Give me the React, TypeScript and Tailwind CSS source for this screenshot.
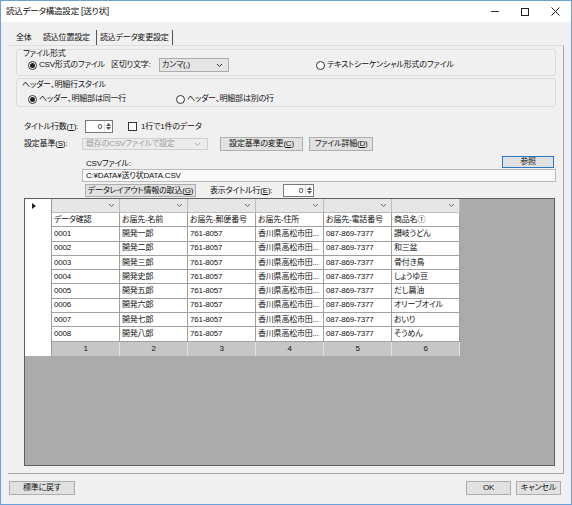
import React from "react";

const rows = [
  ["0001", "開発一郎", "讃岐うどん"],
  ["0002", "開発二郎", "和三盆"],
  ["0003", "開発三郎", "骨付き鳥"],
  ["0004", "開発史郎", "しょうゆ豆"],
  ["0005", "開発五郎", "だし醤油"],
  ["0006", "開発六郎", "オリーブオイル"],
  ["0007", "開発七郎", "おいり"],
  ["0008", "開発八郎", "そうめん"],
];

function Chevron({ color = "#6b6b6b" }: { color?: string }) {
  return (
    <svg width="7" height="5" viewBox="0 0 7 5">
      <polyline points="1,1 3.5,3.5 6,1" fill="none" stroke={color} strokeWidth="1" />
    </svg>
  );
}

function Radio({ on }: { on?: boolean }) {
  return (
    <span className="w-[9px] h-[9px] rounded-full border border-[#333] bg-white flex items-center justify-center shrink-0">
      {on && <span className="w-[5px] h-[5px] rounded-full bg-[#222]" />}
    </span>
  );
}

function Spin({ w }: { w: string }) {
  return (
    <div className={`${w} h-[13px] bg-white border border-[#7a7a7a] flex items-center`}>
      <span className="flex-1 text-right pr-[2px] leading-none">0</span>
      <div className="w-[8px] h-full flex flex-col items-center justify-center gap-[1px] border-l border-[#e0e0e0]">
        <svg width="5" height="3" viewBox="0 0 5 3"><polygon points="0,3 2.5,0 5,3" fill="#555" /></svg>
        <svg width="5" height="3" viewBox="0 0 5 3"><polygon points="0,0 2.5,3 5,0" fill="#555" /></svg>
      </div>
    </div>
  );
}

function Btn({ children, className = "" }: { children: React.ReactNode; className?: string }) {
  return (
    <div className={`h-[14px] bg-[#e1e1e1] border border-[#adadad] flex items-center justify-center whitespace-nowrap leading-none ${className}`}>
      {children}
    </div>
  );
}

export default function App() {
  const cols = ["データ確認", "お届先-名前", "お届先-郵便番号", "お届先-住所", "お届先-電話番号", "商品名①"];
  return (
    <div className="w-[572px] h-[505px] border border-[#6aa1d8] bg-[#f0f0f0] flex flex-col text-[8px] tracking-[-0.2px] text-[#111] font-['Liberation_Sans','Noto_Sans_CJK_JP',sans-serif] [font-feature-settings:'palt'] overflow-hidden">
      {/* title bar */}
      <div className="h-[21px] bg-white flex items-center shrink-0">
        <span className="pl-[5px] text-[8.5px]">読込データ構造設定 [送り状]</span>
        <div className="ml-auto flex items-center h-full">
          <div className="w-[30px] flex justify-center"><div className="w-[8px] h-px bg-[#333]" /></div>
          <div className="w-[30px] flex justify-center"><div className="w-[8px] h-[8px] border border-[#222]" /></div>
          <div className="w-[31px] flex justify-center">
            <svg width="9" height="9" viewBox="0 0 9 9"><path d="M0.5 0.5 L8.5 8.5 M8.5 0.5 L0.5 8.5" stroke="#222" strokeWidth="1" /></svg>
          </div>
        </div>
      </div>

      {/* tabs */}
      <div className="h-[23px] flex items-end pl-[9px] shrink-0">
        <div className="w-[29px] h-[14px] flex items-center pl-[6px]">全体</div>
        <div className="w-[57px] h-[14px] flex items-center pl-[4px]">読込位置設定</div>
        <div className="w-[77px] h-[15px] flex items-center pl-[3px] border-l border-r border-[#555]">読込データ変更設定</div>
      </div>

      {/* tab page */}
      <div className="ml-[7px] w-[556px] h-[429px] border-r border-b border-[#a5a5a5] border-t border-t-[#dcdcdc] flex flex-col shrink-0">
        {/* group 1 */}
        <div className="ml-[8px] mt-[3px] w-[540px] h-[27px] border border-[#dcdcdc] rounded-[3px] flex flex-col">
          <div className="h-[8px] pl-[6px] leading-[8px]">ファイル形式</div>
          <div className="h-[14px] flex items-center pl-[11px]">
            <div className="w-[83px] flex items-center gap-[2px] whitespace-nowrap"><Radio on />CSV形式のファイル</div>
            <div className="w-[48px] whitespace-nowrap">区切り文字:</div>
            <div className="w-[70px] h-[14px] bg-[#e5e5e5] border border-[#acacac] flex items-center pl-[2px] pr-[5px] justify-between">
              <span>カンマ(,)</span>
              <Chevron color="#333" />
            </div>
            <div className="ml-[87px] flex items-center gap-[2px] whitespace-nowrap"><Radio />テキストシーケンシャル形式のファイル</div>
          </div>
        </div>

        {/* group 2 */}
        <div className="ml-[8px] mt-[2px] w-[540px] h-[29px] border border-[#dcdcdc] rounded-[3px] flex flex-col">
          <div className="h-[10px] pl-[5px] leading-[10px] pt-[1px]">ヘッダー、明細行スタイル</div>
          <div className="h-[14px] mt-[3px] flex items-center pl-[11px]">
            <div className="w-[148px] flex items-center gap-[2px] whitespace-nowrap"><Radio on />ヘッダー、明細部は同一行</div>
            <div className="flex items-center gap-[2px] whitespace-nowrap"><Radio />ヘッダー、明細部は別の行</div>
          </div>
        </div>

        {/* title rows */}
        <div className="mt-[13px] ml-[16px] h-[13px] flex items-center">
          <div className="w-[61px] whitespace-nowrap">タイトル行数(<span className="underline">T</span>):</div>
          <Spin w="w-[28px]" />
          <div className="ml-[15px] w-[9px] h-[9px] border border-[#333] bg-white" />
          <div className="ml-[4px] whitespace-nowrap">1行で1件のデータ</div>
        </div>

        <div className="mt-[4px] ml-[16px] h-[14px] flex items-center">
          <div className="w-[58px] whitespace-nowrap">設定基準(<span className="underline">S</span>):</div>
          <div className="w-[126px] h-[12px] bg-[#ececec] border border-[#d0d0d0] flex items-center justify-between pl-[3px] pr-[6px] text-[#9c9c9c]">
            <span>既存のCSVファイルで設定</span>
            <Chevron color="#b0b0b0" />
          </div>
          <Btn className="ml-[12px] w-[83px]">設定基準の変更(<span className="underline">C</span>)</Btn>
          <Btn className="ml-[6px] w-[64px]">ファイル詳細(<span className="underline">D</span>)</Btn>
        </div>

        <div className="mt-[5px] ml-[74px] w-[472px] h-[12px] flex items-center">
          <div className="pl-[4px] pt-[4px] whitespace-nowrap">CSVファイル:</div>
          <div className="ml-auto w-[52px] h-[12px] bg-[#e1e1e1] border-[1.5px] border-[#2b78c8] flex items-center justify-center">参照</div>
        </div>

        <div className="mt-[1px] ml-[74px] w-[474px] h-[13px] bg-[#f9f9f9] border border-[#b9b9b9] flex items-center pl-[3px]">
          C:¥DATA¥送り状DATA.CSV
        </div>

        <div className="mt-[2px] ml-[77px] h-[13px] flex items-center">
          <Btn className="w-[111px] !h-[13px]">データレイアウト情報の取込(<span className="underline">G</span>)</Btn>
          <div className="ml-[14px] w-[73px] whitespace-nowrap">表示タイトル行(<span className="underline">E</span>):</div>
          <Spin w="w-[31px]" />
        </div>

        {/* grid */}
        <div className="mt-[1px] ml-[16px] w-[531px] h-[268px] border border-[#5f5f5f] bg-[#ababab] flex flex-col">
          <div className="flex">
            <div className="w-[27px] bg-white flex flex-col border-r border-[#9a9a9a]">
              <div className="h-[14px] flex items-center pl-[7px]">
                <svg width="4" height="6" viewBox="0 0 4 6"><polygon points="0,0 4,3 0,6" fill="#222" /></svg>
              </div>
              {Array.from({ length: 10 }).map((_, i) => (
                <div key={i} className="h-[14.3px]" />
              ))}
            </div>
            <div className="flex flex-col">
              <div className="h-[14px] flex">
                {cols.map((c) => (
                  <div key={c} className="w-[68px] h-full bg-[#e6e6e6] border-r border-b border-[#bdbdbd] flex items-center justify-end pr-[4px]">
                    <Chevron />
                  </div>
                ))}
              </div>
              <div className="h-[14.3px] flex bg-white">
                {cols.map((c) => (
                  <div key={c} className="w-[68px] h-full border-r border-b border-[#a0a0a0] flex items-center pl-[2px] whitespace-nowrap overflow-hidden">
                    {c}
                  </div>
                ))}
              </div>
              {rows.map((r) => (
                <div key={r[0]} className="h-[14.3px] flex bg-white">
                  <div className="w-[68px] h-full border-r border-b border-[#a0a0a0] flex items-center pl-[2px]">{r[0]}</div>
                  <div className="w-[68px] h-full border-r border-b border-[#a0a0a0] flex items-center pl-[2px]">{r[1]}</div>
                  <div className="w-[68px] h-full border-r border-b border-[#a0a0a0] flex items-center pl-[2px]">761-8057</div>
                  <div className="w-[68px] h-full border-r border-b border-[#a0a0a0] flex items-center pl-[2px] whitespace-nowrap overflow-hidden">香川県高松市田...</div>
                  <div className="w-[68px] h-full border-r border-b border-[#a0a0a0] flex items-center pl-[2px]">087-869-7377</div>
                  <div className="w-[68px] h-full border-r border-b border-[#a0a0a0] flex items-center pl-[2px] whitespace-nowrap">{r[2]}</div>
                </div>
              ))}
              <div className="h-[14.3px] flex bg-[#c6c6c6]">
                {[1, 2, 3, 4, 5, 6].map((n) => (
                  <div key={n} className="w-[68px] h-full border-r border-[#e0e0e0] flex items-center justify-center">{n}</div>
                ))}
              </div>
            </div>
          </div>
        </div>
      </div>

      {/* footer buttons */}
      <div className="h-[14px] mt-[7px] flex items-center pl-[8px] pr-[10px]">
        <Btn className="w-[66px]">標準に戻す</Btn>
        <Btn className="ml-auto w-[45px]">OK</Btn>
        <Btn className="ml-[5px] w-[45px]">キャンセル</Btn>
      </div>
    </div>
  );
}
